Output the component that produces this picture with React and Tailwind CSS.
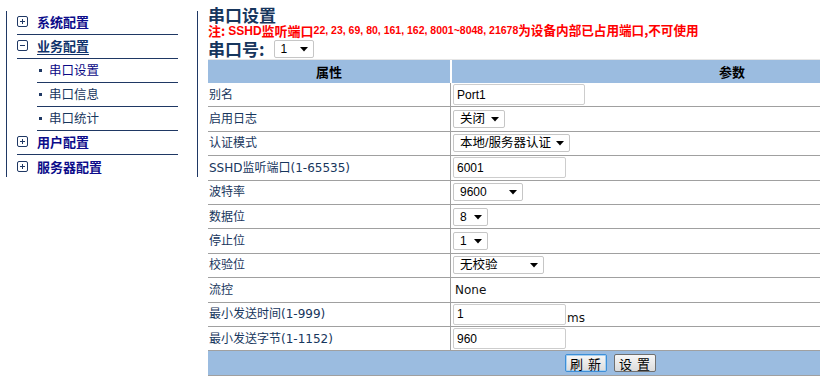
import React from "react";

const CJK = '"Noto Sans CJK SC", sans-serif';

function BoxIcon({ minus }) {
  return (
    <svg width="11" height="11" viewBox="0 0 11 11" className="shrink-0">
      <rect x="0.5" y="0.5" width="10" height="10" rx="1.5" fill="none" stroke="#1f3864" strokeWidth="1" />
      <line x1="3" y1="5.5" x2="8" y2="5.5" stroke="#1f3864" strokeWidth="1" />
      {!minus && <line x1="5.5" y1="3" x2="5.5" y2="8" stroke="#1f3864" strokeWidth="1" />}
    </svg>
  );
}

function TopItem({ label, minus, active, last }) {
  return (
    <div
      className={`flex h-[24px] w-[161px] items-center pb-[2px] ${last ? "" : "border-b border-[#1f3864]"}`}
    >
      <BoxIcon minus={minus} />
      <span
        className={`ml-[9px] text-[13px] font-bold leading-none ${
          active ? "text-[#10336b] underline underline-offset-[3px]" : "text-[#0c0c8a]"
        }`}
        style={{ fontFamily: CJK }}
      >
        {label}
      </span>
    </div>
  );
}

function SubItem({ label, active }) {
  return (
    <div className="ml-[20px] flex h-[24px] w-[141px] items-center border-b border-[#1f3864] pb-[1px] pl-[2px]">
      <span className="h-[3px] w-[3px] bg-[#1f3864]" />
      <span
        className={`ml-[7px] text-[12.5px] leading-none ${active ? "text-[#0a0a85]" : "text-[#17365d]"}`}
        style={{ fontFamily: CJK }}
      >
        {label}
      </span>
    </div>
  );
}

function Select({ value, width, cjk }) {
  return (
    <div
      className="relative flex h-[18px] items-center rounded-[2px] border border-[#c6c6c6] bg-white pl-[6px] text-black"
      style={{ width }}
    >
      <span
        className={`${cjk ? "text-[12.5px]" : "text-[12px]"} leading-none`}
        style={{ fontFamily: '"Liberation Sans", "Noto Sans CJK SC", sans-serif' }}
      >
        {value}
      </span>
      <svg width="8" height="5" viewBox="0 0 8 5" className="absolute right-[5px] top-[6px]">
        <polygon points="0,0 8,0 4,4.5" fill="#000" />
      </svg>
    </div>
  );
}

function Input({ value, width }) {
  return (
    <input
      readOnly
      value={value}
      className="h-[21px] rounded-[2px] border border-[#cdcdcd] bg-white px-[3px] text-[12px] text-black outline-none"
      style={{ width, fontFamily: '"Liberation Sans", sans-serif' }}
    />
  );
}

const rows = [
  { label: "别名", el: <Input value="Port1" width={132} /> },
  { label: "启用日志", el: <Select value="关闭" width={52} cjk /> },
  { label: "认证模式", el: <Select value="本地/服务器认证" width={117} cjk /> },
  { label: "SSHD监听端口(1-65535)", el: <Input value="6001" width={113} /> },
  { label: "波特率", el: <Select value="9600" width={70} /> },
  { label: "数据位", el: <Select value="8" width={35} /> },
  { label: "停止位", el: <Select value="1" width={35} /> },
  { label: "校验位", el: <Select value="无校验" width={91} cjk /> },
  {
    label: "流控",
    el: (
      <span className="pl-[2px] text-[12px] text-[#111]" style={{ fontFamily: '"DejaVu Sans", sans-serif' }}>
        None
      </span>
    ),
  },
  {
    label: "最小发送时间(1-999)",
    el: (
      <div className="flex items-end">
        <Input value="1" width={113} />
        <span
          className="ml-[1px] text-[12px] leading-[14px] text-[#111]"
          style={{ fontFamily: '"DejaVu Sans", sans-serif' }}
        >
          ms
        </span>
      </div>
    ),
  },
  { label: "最小发送字节(1-1152)", el: <Input value="960" width={113} /> },
];

function Button({ chars, focused }) {
  return (
    <button
      className={`flex h-[18px] w-[42px] items-center justify-center gap-[5px] rounded-[2px] border bg-gradient-to-b from-[#f7f7f7] to-[#dcdcdc] text-[13px] leading-none text-black ${
        focused ? "border-[#3d8fd8] shadow-[inset_0_0_0_1px_#a8d0f0]" : "border-[#707070]"
      }`}
      style={{ fontFamily: CJK }}
    >
      <span>{chars[0]}</span>
      <span>{chars[1]}</span>
    </button>
  );
}

export default function App() {
  return (
    <div className="h-[378px] w-[820px] overflow-hidden bg-white" style={{ fontFamily: '"Liberation Sans", "Noto Sans CJK SC", sans-serif' }}>
      <div className="flex items-start">
        <aside className="ml-[6px] mt-[11px] h-[166px] w-[192px] shrink-0 border-x border-[#1f3864] pl-[10px]">
          <TopItem label="系统配置" />
          <TopItem label="业务配置" minus active />
          <SubItem label="串口设置" active />
          <SubItem label="串口信息" />
          <SubItem label="串口统计" />
          <TopItem label="用户配置" />
          <TopItem label="服务器配置" last />
        </aside>

        <main className="ml-[10px] w-[804px] shrink-0 pt-[5px]">
          <h1 className="flex h-[19px] items-center text-[17px] font-bold leading-none text-[#17365d]" style={{ fontFamily: CJK }}>
            串口设置
          </h1>
          <p className="flex h-[13px] items-center whitespace-nowrap font-bold leading-none text-[#ff0000]">
            <span className="text-[13px]" style={{ fontFamily: CJK }}>注:</span>
            <span className="ml-[3px] text-[12px]">SSHD</span>
            <span className="text-[13px]" style={{ fontFamily: CJK }}>监听端口</span>
            <span className="text-[10.5px]">22, 23, 69, 80, 161, 162, 8001~8048, 21678</span>
            <span className="text-[12.6px]" style={{ fontFamily: CJK }}>为设备内部已占用端口,不可使用</span>
          </p>
          <div className="flex h-[22px] items-center pt-[1px]">
            <span className="text-[17px] font-bold leading-none text-[#17365d]" style={{ fontFamily: CJK }}>
              串口号:
            </span>
            <div className="ml-[9px]">
              <Select value="1" width={40} />
            </div>
          </div>

          <div className="w-[804px]">
            <div className="flex h-[24px] border-t border-[#e6e6e6] bg-[#9bbce0] text-[13px] font-bold text-black">
              <div className="flex w-[244px] items-center justify-center border-r-2 border-white" style={{ fontFamily: CJK }}>
                属性
              </div>
              <div className="flex flex-1 items-center justify-center" style={{ fontFamily: CJK }}>
                参数
              </div>
            </div>
            {rows.map((r) => (
              <div key={r.label} className="flex h-[24.4px] border-b border-[#a0a0a0]">
                <div
                  className="flex w-[243px] items-center border-r border-[#a0a0a0] pl-[1px] text-[12px] text-[#17365d]"
                  style={{ fontFamily: '"DejaVu Sans", "Noto Sans CJK SC", sans-serif' }}
                >
                  {r.label}
                </div>
                <div className="flex flex-1 items-center pl-[2px]">{r.el}</div>
              </div>
            ))}
            <div className="flex h-[25px] items-center justify-center gap-[7px] border-b border-[#a0a0a0] bg-[#9bbce0]">
              <Button chars={["刷", "新"]} focused />
              <Button chars={["设", "置"]} />
            </div>
          </div>
        </main>
      </div>
    </div>
  );
}
